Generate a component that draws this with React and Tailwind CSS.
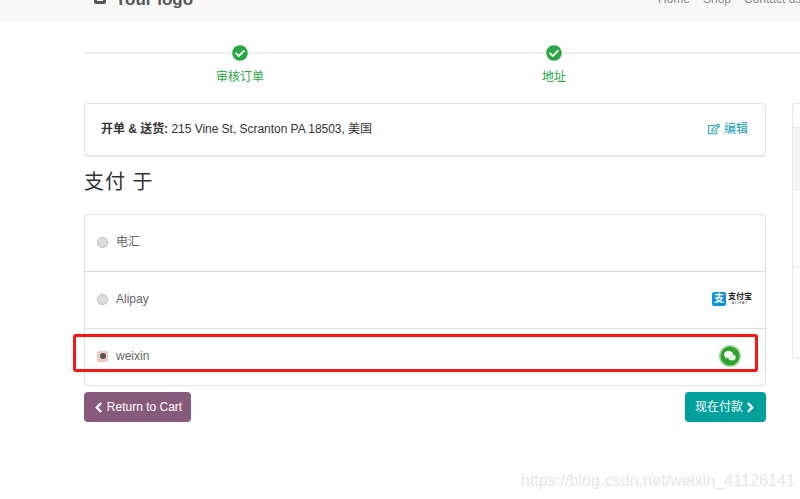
import { FaCheckCircle, FaChevronLeft, FaChevronRight, FaRegEdit } from 'react-icons/fa';

const font = 'font-["Liberation_Sans","Noto_Sans_CJK_SC",sans-serif]';

function Step({ label }) {
  return (
    <div className="-mt-[9px] flex w-[314px] shrink-0 flex-col items-center pr-[2px]">
      <span className="rounded-full bg-white">
        <FaCheckCircle size={16} className="text-[#28a745]" />
      </span>
      <span className="mt-[8px] text-[12px] leading-[16px] text-[#28a745]">{label}</span>
    </div>
  );
}

function AlipayLogo() {
  return (
    <div className="flex items-center gap-[2px]">
      <span className="flex h-[14px] w-[14px] items-center justify-center rounded-[2px] bg-[#1296db] text-[10px] font-bold leading-none text-white">
        支
      </span>
      <div className="flex w-[24px] flex-col items-center leading-none text-[#222]">
        <span className="text-[8px] font-bold">支付宝</span>
        <span className="mt-[1px] text-[3px] tracking-[1px]">ALIPAY</span>
      </div>
    </div>
  );
}

function WeixinLogo() {
  return (
    <svg width="22" height="22" viewBox="0 0 22 22" className="block">
      <circle cx="11" cy="11" r="11" fill="#a5d6a0" />
      <circle cx="11" cy="11" r="9.5" fill="#2ea32e" />
      <ellipse cx="9.5" cy="9.5" rx="4.5" ry="3.6" fill="#fff" />
      <ellipse cx="13" cy="12.5" rx="3.8" ry="3" fill="#e4f4e2" />
      <path d="M7 12l-.6 2 2.2-1.2z" fill="#fff" />
    </svg>
  );
}

function PayRow({ label, checked, children, last }) {
  return (
    <div className={`flex items-center justify-between pb-[2px] pl-[12px] pr-[13px] ${last ? 'h-[56px]' : 'h-[57px] border-b border-[#dcdcdc]'}`}>
      <div className="flex items-center gap-[8px]">
        {checked ? (
          <span className="flex h-[11px] w-[11px] items-center justify-center rounded-[2px] bg-[#f0c8c0]">
            <span className="h-[6px] w-[6px] rounded-full bg-[#555]" />
          </span>
        ) : (
          <span className="h-[11px] w-[11px] rounded-full border border-[#bbb] bg-[#ddd]" />
        )}
        <span className="mb-px text-[12px] text-[#666]">{label}</span>
      </div>
      {children}
    </div>
  );
}

export default function App() {
  return (
    <div className={`relative h-[499px] w-[800px] overflow-hidden bg-white ${font}`}>
      <nav className="flex h-[21px] items-end justify-between overflow-hidden bg-[#f8f8f8] pl-[94px]">
        <div className="flex items-center gap-[9px] text-[#555]">
          <span className="mb-[14px] h-[11px] w-[12px] rounded-[2px] border-[3px] border-[#555]" />
          <span className="mb-[11px] text-[17px] font-bold leading-[20px]">Your logo</span>
        </div>
        <div className="mb-[13px] flex shrink-0 gap-[13px] whitespace-nowrap pl-[10px] text-[12px] leading-[18px] text-[#888]">
          <span>Home</span>
          <span>Shop</span>
          <span className="w-[56px]">Contact us</span>
        </div>
      </nav>

      <div className="flex pl-[84px]">
        <main className="w-[682px] shrink-0">
          <div className="mt-[31px] flex w-[942px] border-t-2 border-[#eeeeee]">
            <Step label="审核订单" />
            <Step label="地址" />
            <Step label="付款" />
          </div>

          <div className="mt-[18px] flex h-[53px] items-center justify-between rounded-[4px] border border-[#e2e2e2] pb-[2px] pl-[16px] pr-[17px] shadow-[0_1px_1px_rgba(0,0,0,0.08)]">
            <p className="text-[12px] tracking-[-0.03px] text-[#333]">
              <b>开单 &amp; 送货:</b> 215 Vine St, Scranton PA 18503, 美国
            </p>
            <span className="flex items-center gap-[4px] text-[12px] text-[#17a2b8]">
              <FaRegEdit size={12} />
              编辑
            </span>
          </div>

          <h2 className="mt-[12px] text-[20px] leading-[28px] tracking-[1px] text-[#333]">支付 于</h2>

          <div className="mt-[18px] rounded-[4px] border border-[#dfdfdf]">
            <PayRow label="电汇" />
            <PayRow label="Alipay">
              <AlipayLogo />
            </PayRow>
            <PayRow label="weixin" checked last>
              <span className="mr-[11px]">
                <WeixinLogo />
              </span>
            </PayRow>
          </div>

          <div className="mt-[6px] flex justify-between">
            <button className="flex h-[30px] w-[107px] items-center justify-center gap-[3px] rounded-[4px] bg-[#875a7b] text-[12px] text-white">
              <FaChevronLeft size={11} stroke="currentColor" strokeWidth={40} />
              Return to Cart
            </button>
            <button className="flex h-[30px] w-[81px] items-center justify-center gap-[2px] rounded-[4px] bg-[#00a09d] text-[12px] text-white">
              现在付款
              <FaChevronRight size={11} stroke="currentColor" strokeWidth={40} />
            </button>
          </div>
        </main>

        <aside className="ml-[26px] mt-[82px] h-[256px] w-[40px] shrink-0 rounded-l-[4px] border border-r-0 border-[#e8e8e8]">
          <div className="h-[24px] border-b border-[#e8e8e8]" />
          <div className="h-[63px] bg-[#f5f5f5]" />
          <div className="h-[77px] border-b border-[#e8e8e8]" />
        </aside>
      </div>

      {/* red highlight drawn over the screenshot */}
      <div className="absolute left-[73px] top-[334px] h-[38px] w-[685px] rounded-[3px] border-[3px] border-[#fa1414]" />
      <div className="absolute bottom-[9px] right-[5px] text-[16.2px] leading-[20px] text-[#e6e6e6]">
        https://blog.csdn.net/weixin_41126141
      </div>
    </div>
  );
}
